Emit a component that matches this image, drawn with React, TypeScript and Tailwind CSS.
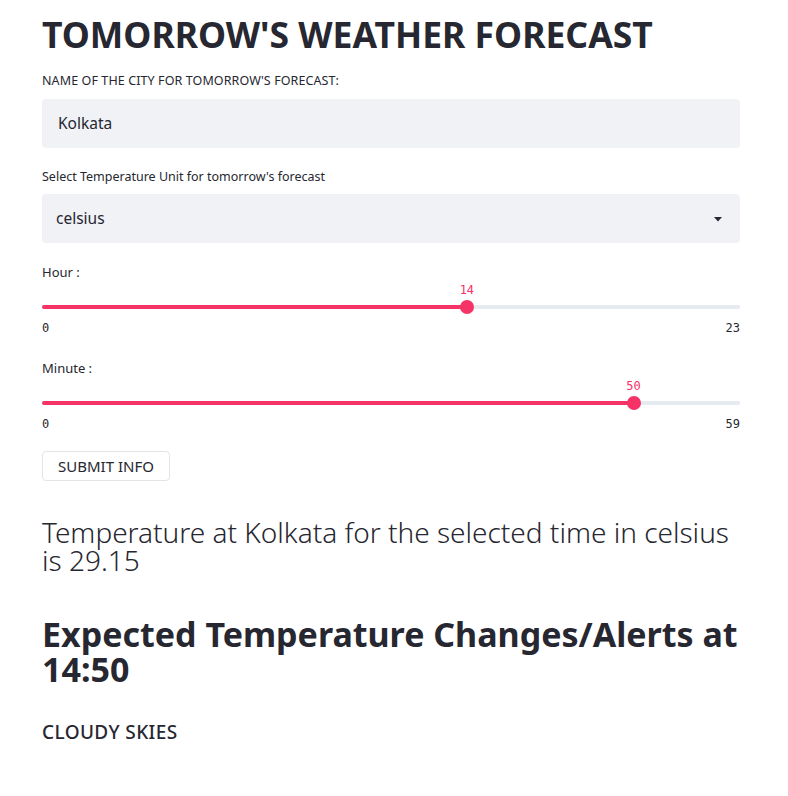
import React from 'react';

const font = { fontFamily: '"Noto Sans", "Open Sans", sans-serif' };
const mono = { fontFamily: '"DejaVu Sans Mono", "Liberation Mono", monospace' };

function Slider({ label, value, min, max }: { label: string; value: number; min: number; max: number }) {
  const pct = ((value - min) / (max - min)) * 100;
  return (
    <div className="flex flex-col">
      <div className="text-[13px] leading-4 text-[#262730]">{label}</div>
      <div className="relative mt-[2px] h-4">
        <span
          className="absolute top-0 -translate-x-1/2 text-[12px] leading-4 text-[#f63366]"
          style={{ ...mono, left: `${pct}%` }}
        >
          {value}
        </span>
      </div>
      <div className="relative h-[18px]">
        <div className="absolute left-0 right-0 top-[7px] h-1 rounded-full bg-[#e6eaf1]" />
        <div
          className="absolute left-0 top-[7px] h-1 rounded-full bg-[#f63366]"
          style={{ width: `${pct}%` }}
        />
        <div
          className="absolute top-[2px] h-[14px] w-[14px] -translate-x-1/2 rounded-full bg-[#f63366]"
          style={{ left: `${pct}%` }}
        />
      </div>
      <div className="mt-1 flex justify-between text-[12px] leading-4 text-[#262730]" style={mono}>
        <span>{min}</span>
        <span>{max}</span>
      </div>
    </div>
  );
}

export default function App() {
  return (
    <div className="min-h-[796px] bg-white text-[#262730]" style={font}>
      <div className="ml-[42px] flex w-[698px] flex-col pt-3 pb-10">
        <h1 className="text-[35.5px] font-bold leading-[44px]">TOMORROW'S WEATHER FORECAST</h1>

        <div className="mt-[17px] text-[12.5px] leading-4 tracking-[0.1px]">NAME OF THE CITY FOR TOMORROW'S FORECAST:</div>
        <div className="mt-[10px] flex h-[49px] items-center rounded-[4px] bg-[#f0f2f6] px-4 text-[15.5px]">
          Kolkata
        </div>

        <div className="mt-[21px] text-[12.5px] leading-4">Select Temperature Unit for tomorrow's forecast</div>
        <div className="mt-[9px] flex h-[49px] items-center justify-between rounded-[4px] bg-[#f0f2f6] pl-[14px] pr-[18px] text-[15.5px]">
          <span>celsius</span>
          <svg width="8" height="5" viewBox="0 0 8 5" className="mt-[1px]">
            <path d="M0 0 H8 L4 4.5 Z" fill="#262730" />
          </svg>
        </div>

        <div className="mt-[21px]">
          <Slider label="Hour :" value={14} min={0} max={23} />
        </div>
        <div className="mt-6">
          <Slider label="Minute :" value={50} min={0} max={59} />
        </div>

        <div className="mt-[19px]">
          <button className="h-[30px] w-[128px] rounded-[4px] border border-[#e3e4e8] bg-white text-[15px] text-[#262730]">
            SUBMIT INFO
          </button>
        </div>

        <p className="mt-[37px] text-[28px] font-light leading-[28px]">
          Temperature at Kolkata for the selected time in celsius is 29.15
        </p>

        <h2 className="mt-[43px] text-[34px] font-bold leading-[35px]">
          Expected Temperature Changes/Alerts at 14:50
        </h2>

        <div className="mt-[33px] text-[19px] font-medium leading-6 tracking-[0.4px]">CLOUDY SKIES</div>
      </div>
    </div>
  );
}
